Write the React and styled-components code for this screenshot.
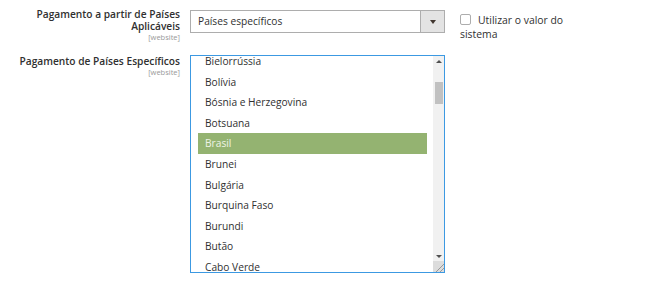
import React from 'react'
import styled, {createGlobalStyle} from 'styled-components'

const countries = [
    'Bielorrússia',
    'Bolívia',
    'Bósnia e Herzegovina',
    'Botsuana',
    'Brasil',
    'Brunei',
    'Bulgária',
    'Burquina Faso',
    'Burundi',
    'Butão',
    'Cabo Verde',
]

const App = () => {
    return (
        <>
            <GlobalStyle />
            <Form>
                <Row>
                    <Label shift={-2}>
                        <LabelText>Pagamento a partir de Países Aplicáveis</LabelText>
                        <Scope>[website]</Scope>
                    </Label>
                    <Select>
                        <SelectValue>Países específicos</SelectValue>
                        <SelectButton>
                            <Arrow />
                        </SelectButton>
                    </Select>
                    <UseDefault>
                        <Checkbox />
                        Utilizar o valor do sistema
                    </UseDefault>
                </Row>
                <Row>
                    <Label shift={0}>
                        <LabelText>Pagamento de Países Específicos</LabelText>
                        <Scope>[website]</Scope>
                    </Label>
                    <MultiSelect>
                        <Options>
                            {countries.map((c) => (
                                <Option key={c} selected={c === 'Brasil'}>
                                    {c}
                                </Option>
                            ))}
                        </Options>
                        <Scrollbar>
                            <ScrollArrow />
                            <Track>
                                <Thumb />
                            </Track>
                            <ScrollArrow down />
                            <Resizer />
                        </Scrollbar>
                    </MultiSelect>
                </Row>
            </Form>
        </>
    )
}

export default App

const GlobalStyle = createGlobalStyle`
    body {
        margin: 0;
        background: #fff;
        font-family: 'Open Sans', 'Liberation Sans', sans-serif;
        color: #303030;
    }
`
const Form = styled.div`
    padding-top: 10px;
    display: flex;
    flex-direction: column;
    gap: 13px;
`
const Row = styled.div`
    display: grid;
    grid-template-columns: 170px 255px 1fr;
    column-gap: 10px;
    padding-left: 10px;
    align-items: start;
`
const Label = styled.div`
    margin-top: ${(p) => p.shift}px;
    text-align: right;
    display: flex;
    flex-direction: column;
    align-items: flex-end;
`
const LabelText = styled.div`
    font-size: 10.2px;
    font-weight: 600;
    line-height: 12px;
`
const Scope = styled.div`
    font-size: 7.5px;
    color: #999;
    line-height: 10px;
`
const Select = styled.div`
    height: 23px;
    box-sizing: border-box;
    border: 1px solid #adadad;
    display: flex;
    align-items: stretch;
    background: #fff;
`
const SelectValue = styled.div`
    flex: 1;
    font-size: 10.2px;
    line-height: 21px;
    padding-left: 7px;
`
const SelectButton = styled.div`
    width: 23px;
    background: #e3e3e3;
    border-left: 1px solid #adadad;
    display: flex;
    align-items: center;
    justify-content: center;
`
const Arrow = styled.div`
    width: 0;
    height: 0;
    border-left: 3px solid transparent;
    border-right: 3px solid transparent;
    border-top: 4px solid #41362f;
`
const UseDefault = styled.label`
    display: block;
    margin-left: 5px;
    padding-top: 3px;
    font-size: 10.4px;
    line-height: 14px;
    color: #303030;
    width: 110px;
`
const Checkbox = styled.span`
    display: inline-block;
    width: 9px;
    height: 9px;
    border: 1px solid #adadad;
    border-radius: 2px;
    background: #fff;
    vertical-align: -1px;
    margin-right: 7px;
`
const MultiSelect = styled.div`
    height: 218px;
    box-sizing: border-box;
    border: 1px solid #3c99e2;
    display: flex;
    overflow: hidden;
`
const Options = styled.div`
    flex: 1;
    padding: 0 6px 0 7px;
    margin-top: -5px;
`
const Option = styled.div`
    height: 20.6px;
    line-height: 20.6px;
    padding-left: 7px;
    font-size: 10.2px;
    color: ${(p) => (p.selected ? '#eef3e6' : '#303030')};
    background: ${(p) => (p.selected ? '#94b371' : 'transparent')};
`
const Scrollbar = styled.div`
    width: 11px;
    background: #f1f1f1;
    display: flex;
    flex-direction: column;
    align-items: center;
`
const ScrollArrow = styled.div`
    height: 10px;
    width: 11px;
    display: flex;
    align-items: center;
    justify-content: center;
    &::after {
        content: '';
        border-left: 3px solid transparent;
        border-right: 3px solid transparent;
        ${(p) => (p.down ? 'border-top: 3px solid #505050;' : 'border-bottom: 3px solid #505050;')}
    }
`
const Track = styled.div`
    flex: 1;
    width: 100%;
    padding-top: 16px;
    box-sizing: border-box;
    display: flex;
    justify-content: center;
`
const Thumb = styled.div`
    width: 8px;
    height: 22px;
    background: #c1c1c1;
`
const Resizer = styled.div`
    width: 11px;
    height: 11px;
    background: linear-gradient(135deg, #dcdcdc 0 60%, #999 60% 66%, #dcdcdc 66% 78%, #999 78% 84%, #dcdcdc 84%);
`
